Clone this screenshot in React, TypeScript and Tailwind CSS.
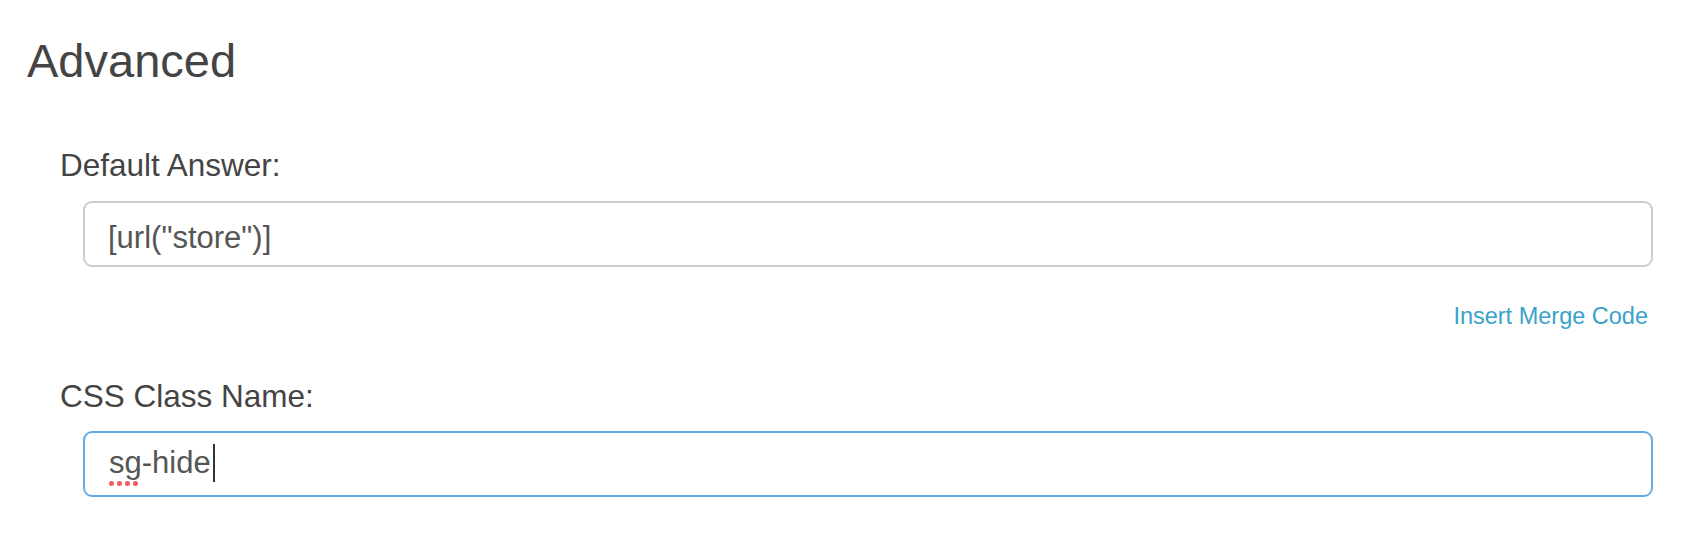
import React from "react";

export default function App() {
  const font = { fontFamily: '"Liberation Sans", Arial, sans-serif' };
  return (
    <div className="w-[1688px] h-[536px] bg-white overflow-hidden" style={font}>
      <div className="pt-[33px] pl-[27px]">
        <h1 className="text-[47px] leading-[56px] text-[#444444] font-normal">Advanced</h1>
      </div>
      <div className="pl-[60px] pr-[35px]">
        <div className="mt-[56px] text-[31.5px] leading-[40px] text-[#444444]">Default Answer:</div>
        <div className="ml-[23px] mt-[16px] h-[66px] rounded-[9px] border-2 border-[#cccccc] bg-white pl-[23px] pt-[8px] flex items-center text-[31px] leading-[34px] text-[#555555]">
          [url("store")]
        </div>
        <div className="mt-[34px] flex justify-end pr-[5px]">
          <a className="text-[23.5px] leading-[30px] text-[#3aa2c8] cursor-pointer">Insert Merge Code</a>
        </div>
        <div className="mt-[45px] text-[31.5px] leading-[40px] text-[#444444]">CSS Class Name:</div>
        <div className="ml-[23px] mt-[15px] h-[66px] rounded-[9px] border-2 border-[#63abe6] bg-white pl-[24px] pb-[2px] flex items-center text-[31px] leading-[34px] text-[#555555]">
          <span className="relative">
            sg
            <span className="absolute left-[0px] top-[35px] flex gap-[3px]">
              <span className="w-[5px] h-[5px] rounded-full bg-[#f25b5b]" />
              <span className="w-[5px] h-[5px] rounded-full bg-[#f25b5b]" />
              <span className="w-[5px] h-[5px] rounded-full bg-[#f25b5b]" />
              <span className="w-[5px] h-[5px] rounded-full bg-[#f25b5b]" />
            </span>
          </span>
          <span>-hide</span>
          <span className="ml-[2px] w-[2px] h-[38px] bg-[#333333]" />
        </div>
      </div>
    </div>
  );
}
